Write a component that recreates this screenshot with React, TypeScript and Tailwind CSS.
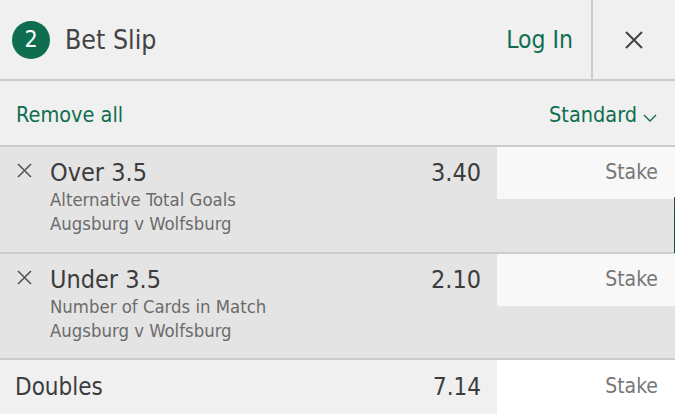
type Bet = {
  id: number;
  selection: string;
  market: string;
  event: string;
  odds: string;
  height: string;
};

const bets: Bet[] = [
  { id: 1, selection: "Over 3.5", market: "Alternative Total Goals", event: "Augsburg v Wolfsburg", odds: "3.40", height: "h-[107px]" },
  { id: 2, selection: "Under 3.5", market: "Number of Cards in Match", event: "Augsburg v Wolfsburg", odds: "2.10", height: "h-[106px]" },
];

function BetRow({ bet }: { bet: Bet }) {
  return (
    <div className={`flex ${bet.height} border-b-2 border-[#cccccc] bg-[#e4e4e4]`}>
      <div className="flex flex-1 pl-[17px] pt-[11px]">
        <button type="button" className="mt-[5px] h-[15px] w-[15px] text-[#555]">
          <svg viewBox="0 0 15 15" className="h-[15px] w-[15px]" fill="none" stroke="currentColor" strokeWidth="1.6">
            <path d="M1 1 L14 14 M14 1 L1 14" />
          </svg>
        </button>
        <div className="ml-[18px] flex-1">
          <div className="text-[25px] leading-[30px] text-[#3c3c3c]">{bet.selection}</div>
          <div className="text-[18.4px] leading-[24px] text-[#6b6b6b]">{bet.market}</div>
          <div className="text-[18.4px] leading-[24px] text-[#6b6b6b]">{bet.event}</div>
        </div>
        <div className="pr-4 text-[25px] leading-[30px] text-[#3c3c3c]">{bet.odds}</div>
      </div>
      <div className="flex h-[52px] w-[178px] items-center justify-end bg-[#f8f8f8] pr-[17px] text-[21px] text-[#777]">
        Stake
      </div>
    </div>
  );
}

export default function App() {
  return (
    <div className="relative h-[414px] w-[675px] overflow-hidden bg-[#f0f0f0] font-['DejaVu_Sans_Condensed','DejaVu_Sans',sans-serif]">
      <div className="flex h-[81px] border-b-2 border-[#cccccc]">
        <div className="flex flex-1 items-center pl-3">
          <div className="flex h-[38px] w-[38px] items-center justify-center rounded-full bg-[#0f6e4f] text-[23px] text-white">
            2
          </div>
          <span className="ml-[15px] text-[26.5px] text-[#444]">Bet Slip</span>
        </div>
        <button type="button" className="pr-[18px] pt-[2px] text-[24.5px] text-[#0f6e4f]">
          Log In
        </button>
        <button type="button" className="flex w-[84px] items-center justify-center border-l-2 border-[#cccccc] text-[#444]">
          <svg viewBox="0 0 18 18" className="h-[18px] w-[18px]" fill="none" stroke="currentColor" strokeWidth="2">
            <path d="M1 1 L17 17 M17 1 L1 17" />
          </svg>
        </button>
      </div>

      <div className="flex h-[66px] items-center justify-between border-b-2 border-[#cccccc] pl-4 pr-[18px] pt-[5px] text-[21.5px] text-[#0f6e4f]">
        <button type="button">Remove all</button>
        <button type="button" className="flex items-center gap-[6px]">
          Standard
          <svg viewBox="0 0 14 8" className="mt-[4px] h-[8px] w-[14px]" fill="none" stroke="currentColor" strokeWidth="1.4">
            <path d="M1 1 L7 7 L13 1" />
          </svg>
        </button>
      </div>

      {bets.map((bet) => (
        <BetRow key={bet.id} bet={bet} />
      ))}

      <div className="flex h-[54px]">
        <div className="flex flex-1 items-center justify-between pl-[15px] pr-4 text-[24px] text-[#3c3c3c]">
          <span>Doubles</span>
          <span>7.14</span>
        </div>
        <div className="flex w-[178px] items-center justify-end bg-white pr-[17px] text-[21px] text-[#777]">
          Stake
        </div>
      </div>

      <div className="absolute right-0 top-[197px] h-[13px] w-px bg-[#444]" />
      <div className="absolute right-0 top-[210px] h-[43px] w-px bg-[#0b5c40]" />
    </div>
  );
}
